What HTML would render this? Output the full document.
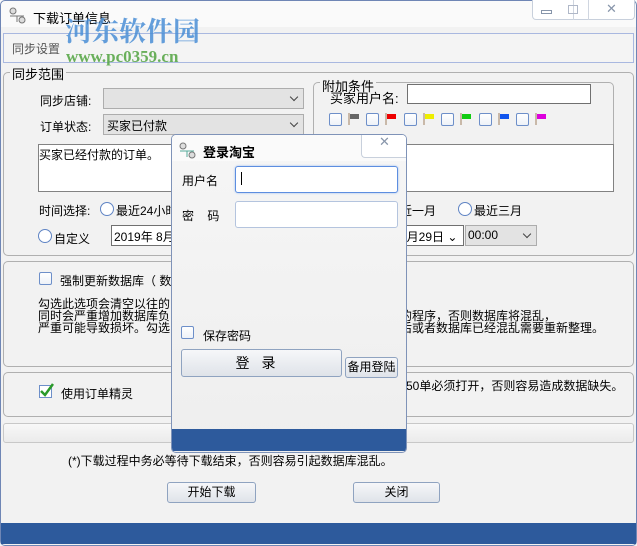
<!DOCTYPE html>
<html><head><meta charset="utf-8"><style>
*{box-sizing:border-box;margin:0;padding:0}
body{width:637px;height:546px;overflow:hidden;background:#f2f2f2;font-family:"Liberation Sans","Noto Sans CJK SC",sans-serif;font-size:12px;color:#000;position:relative}
.a{position:absolute;white-space:nowrap}
.grp{position:absolute;border:1px solid #b0b0b0;border-radius:5px}
.cb{position:absolute;width:13px;height:13px;border:1px solid #6d8fc9;border-radius:2px;background:linear-gradient(#fff,#eef2f8)}
.rad{position:absolute;width:14px;height:14px;border:1px solid #5f84c4;border-radius:50%;background:#fff}
.combo{position:absolute;background:#e3e3e3;border:1px solid #adadad}
.combo:after{content:"";position:absolute;right:6px;top:5px;width:5px;height:5px;border-right:1px solid #444;border-bottom:1px solid #444;transform:rotate(45deg)}
.btn{position:absolute;border:1px solid #8fa3c0;border-radius:3px;background:linear-gradient(#f6f7f9,#dfe3e9);text-align:center}
.flag{position:absolute;width:12px;height:12px}
</style></head><body>
<div class="a" style="left:0;top:0;width:637px;height:27px;background:#fafafa"></div>
<div class="a" style="left:0;top:0;width:637px;height:546px;border:1px solid #6f86b5;border-radius:5px"></div>
<svg class="a" style="left:8px;top:6px" width="20" height="18"><circle cx="5" cy="5" r="3" fill="#ddd" stroke="#777"/><line x1="2" y1="10" x2="16" y2="10" stroke="#777"/><line x1="9" y1="10" x2="9" y2="16" stroke="#777"/><circle cx="14" cy="14" r="3" fill="#ddd" stroke="#777"/></svg>
<div class="a" style="left:33px;top:8px;font-size:13px">下载订单信息</div>
<div class="a" style="left:532px;top:0;width:103px;height:20px;border:1px solid #c8d0dc;border-top:none;border-radius:0 0 4px 4px;background:#fff"></div>
<div class="a" style="left:573px;top:0;height:20px;border-left:1px solid #d0d6e0"></div>
<div class="a" style="left:588px;top:0;height:20px;border-left:1px solid #d0d6e0"></div>
<div class="a" style="left:541px;top:10px;width:11px;height:4px;border:1px solid #8795aa"></div>
<div class="a" style="left:568px;top:5px;width:10px;height:9px;border:1px solid #b0b8c8"></div>
<div class="a" style="left:606px;top:1px;font-size:13px;color:#8795aa">✕</div>

<div class="a" style="left:3px;top:33px;width:631px;height:30px;border:1px solid #a9b8e0;background:#f4f4f4"></div>
<div class="a" style="left:12px;top:40px;color:#555">同步设置</div>
<div class="a" style="left:65px;top:10px;font-family:'Noto Serif CJK SC',serif;font-weight:bold;font-size:27px;color:#4a8fd6;opacity:.85">河东软件园</div>
<div class="a" style="left:66px;top:47px;font-family:'Liberation Serif',serif;font-weight:bold;font-size:17px;color:#5aa84a;opacity:.9">www.pc0359.cn</div>

<div class="grp" style="left:3px;top:72px;width:631px;height:184px"></div>
<div class="a" style="left:10px;top:64px;background:#f2f2f2;padding:0 2px;font-size:13px">同步范围</div>
<div class="a" style="left:40px;top:92px">同步店铺:</div>
<div class="combo" style="left:103px;top:88px;width:201px;height:21px"></div>
<div class="a" style="left:40px;top:118px">订单状态:</div>
<div class="combo" style="left:103px;top:114px;width:201px;height:21px"></div>
<div class="a" style="left:107px;top:117px">买家已付款</div>
<div class="grp" style="left:313px;top:82px;width:301px;height:70px"></div>
<div class="a" style="left:320px;top:76px;background:#f2f2f2;padding:0 2px;font-size:13px">附加条件</div>
<div class="a" style="left:330px;top:88px;font-size:13px">买家用户名:</div>
<div class="a" style="left:407px;top:84px;width:184px;height:20px;border:1px solid #707070;background:#fff"></div>
<div class="cb" style="left:329px;top:113px"></div><svg class="flag" style="left:348px;top:113px"><line x1="1" y1="0" x2="1" y2="12" stroke="#a08060"/><path d="M2 1h9v5h-9z" fill="#666"/></svg>
<div class="cb" style="left:366px;top:113px"></div><svg class="flag" style="left:385px;top:113px"><line x1="1" y1="0" x2="1" y2="12" stroke="#a08060"/><path d="M2 1h9v5h-9z" fill="#e00"/></svg>
<div class="cb" style="left:404px;top:113px"></div><svg class="flag" style="left:423px;top:113px"><line x1="1" y1="0" x2="1" y2="12" stroke="#a08060"/><path d="M2 1h9v5h-9z" fill="#ee0"/></svg>
<div class="cb" style="left:441px;top:113px"></div><svg class="flag" style="left:460px;top:113px"><line x1="1" y1="0" x2="1" y2="12" stroke="#a08060"/><path d="M2 1h9v5h-9z" fill="#1c1"/></svg>
<div class="cb" style="left:479px;top:113px"></div><svg class="flag" style="left:498px;top:113px"><line x1="1" y1="0" x2="1" y2="12" stroke="#a08060"/><path d="M2 1h9v5h-9z" fill="#15e"/></svg>
<div class="cb" style="left:516px;top:113px"></div><svg class="flag" style="left:535px;top:113px"><line x1="1" y1="0" x2="1" y2="12" stroke="#a08060"/><path d="M2 1h9v5h-9z" fill="#d0d"/></svg>
<div class="a" style="left:38px;top:144px;width:576px;height:48px;border:1px solid #828282;background:#fff"></div>
<div class="a" style="left:39px;top:146px">买家已经付款的订单。</div>
<div class="a" style="left:39px;top:202px">时间选择:</div>
<div class="rad" style="left:100px;top:202px"></div><div class="a" style="left:116px;top:202px">最近24小时</div>
<div class="a" style="left:400px;top:202px">近一月</div>
<div class="rad" style="left:458px;top:202px"></div><div class="a" style="left:474px;top:202px">最近三月</div>
<div class="rad" style="left:38px;top:229px"></div><div class="a" style="left:54px;top:230px">自定义</div>
<div class="a" style="left:111px;top:225px;width:353px;height:21px;border:1px solid #707070;background:#fff"></div>
<div class="a" style="left:114px;top:228px">2019年 8月</div>
<div class="a" style="left:400px;top:228px">8月29日 ⌄</div>
<div class="combo" style="left:465px;top:225px;width:72px;height:21px"></div>
<div class="a" style="left:468px;top:228px">00:00</div>

<div class="grp" style="left:3px;top:261px;width:631px;height:106px"></div>
<div class="cb" style="left:39px;top:272px"></div>
<div class="a" style="left:60px;top:272px">强制更新数据库（ 数</div>
<div class="a" style="left:38px;top:298px;line-height:12px">勾选此选项会清空以往的<br>同时会严重增加数据库负<br>严重可能导致损坏。勾选</div>
<div class="a" style="left:400px;top:310px;line-height:12px">的程序，否则数据库将混乱，<br>后或者数据库已经混乱需要重新整理。</div>

<div class="grp" style="left:3px;top:372px;width:631px;height:45px"></div>
<svg class="a" style="left:39px;top:383px" width="15" height="15"><rect x=".5" y="2.5" width="12" height="12" fill="#fff" stroke="#6d8fc9"/><path d="M2 8l4 4 8-11" stroke="#2a9a2a" stroke-width="2.5" fill="none"/></svg>
<div class="a" style="left:61px;top:385px">使用订单精灵</div>
<div class="a" style="left:406px;top:377px">50单必须打开，否则容易造成数据缺失。</div>
<div class="a" style="left:3px;top:423px;width:631px;height:20px;border:1px solid #c8c8c8;border-radius:3px;background:linear-gradient(#f8f8f8,#ebebeb)"></div>
<div class="a" style="left:68px;top:452px">(*)下载过程中务必等待下载结束，否则容易引起数据库混乱。</div>
<div class="btn" style="left:167px;top:482px;width:89px;height:21px;line-height:19px">开始下载</div>
<div class="btn" style="left:353px;top:482px;width:87px;height:21px;line-height:19px">关闭</div>
<div class="a" style="left:1px;top:523px;width:635px;height:21px;background:#2d5a9c"></div>

<div class="a" style="left:171px;top:134px;width:236px;height:319px;border:1px solid #7f93b8;border-radius:5px;background:linear-gradient(#f6f6f6,#eeeeee);overflow:hidden">
 <div class="a" style="left:0;top:0;width:234px;height:26px;background:#fafafa"></div>
 <div class="a" style="left:189px;top:-1px;width:46px;height:24px;border:1px solid #c8d0dc;border-top:none;border-right:none;border-radius:0 0 0 4px;background:#fff;color:#8795aa;text-align:center;font-size:13px">✕</div>
 <svg class="a" style="left:6px;top:6px" width="20" height="18"><circle cx="5" cy="5" r="3" fill="#ddd" stroke="#777"/><line x1="2" y1="10" x2="16" y2="10" stroke="#5a9"/><line x1="9" y1="10" x2="9" y2="16" stroke="#5a9"/><circle cx="14" cy="14" r="3" fill="#ddd" stroke="#777"/></svg>
 <div class="a" style="left:31px;top:7px;font-weight:bold;font-size:13px">登录淘宝</div>
 <div class="a" style="left:10px;top:37px">用户名</div>
 <div class="a" style="left:63px;top:31px;width:163px;height:27px;border:1px solid #5d8ee0;border-radius:3px;background:#fff;box-shadow:0 0 2px #9bbbee"></div>
 <div class="a" style="left:69px;top:37px;width:1px;height:13px;background:#000"></div>
 <div class="a" style="left:10px;top:72px">密&nbsp;&nbsp;&nbsp;&nbsp;码</div>
 <div class="a" style="left:63px;top:66px;width:163px;height:27px;border:1px solid #b4c4de;border-radius:3px;background:#fff"></div>
 <div class="cb" style="left:9px;top:191px"></div>
 <div class="a" style="left:31px;top:192px">保存密码</div>
 <div class="btn" style="left:9px;top:214px;width:161px;height:28px;line-height:26px;font-size:14px;letter-spacing:12px">登录</div>
 <div class="btn" style="left:173px;top:222px;width:53px;height:21px;line-height:19px">备用登陆</div>
 <div class="a" style="left:0;top:294px;width:236px;height:22px;background:#2d5a9c"></div>
</div>
</body></html>
